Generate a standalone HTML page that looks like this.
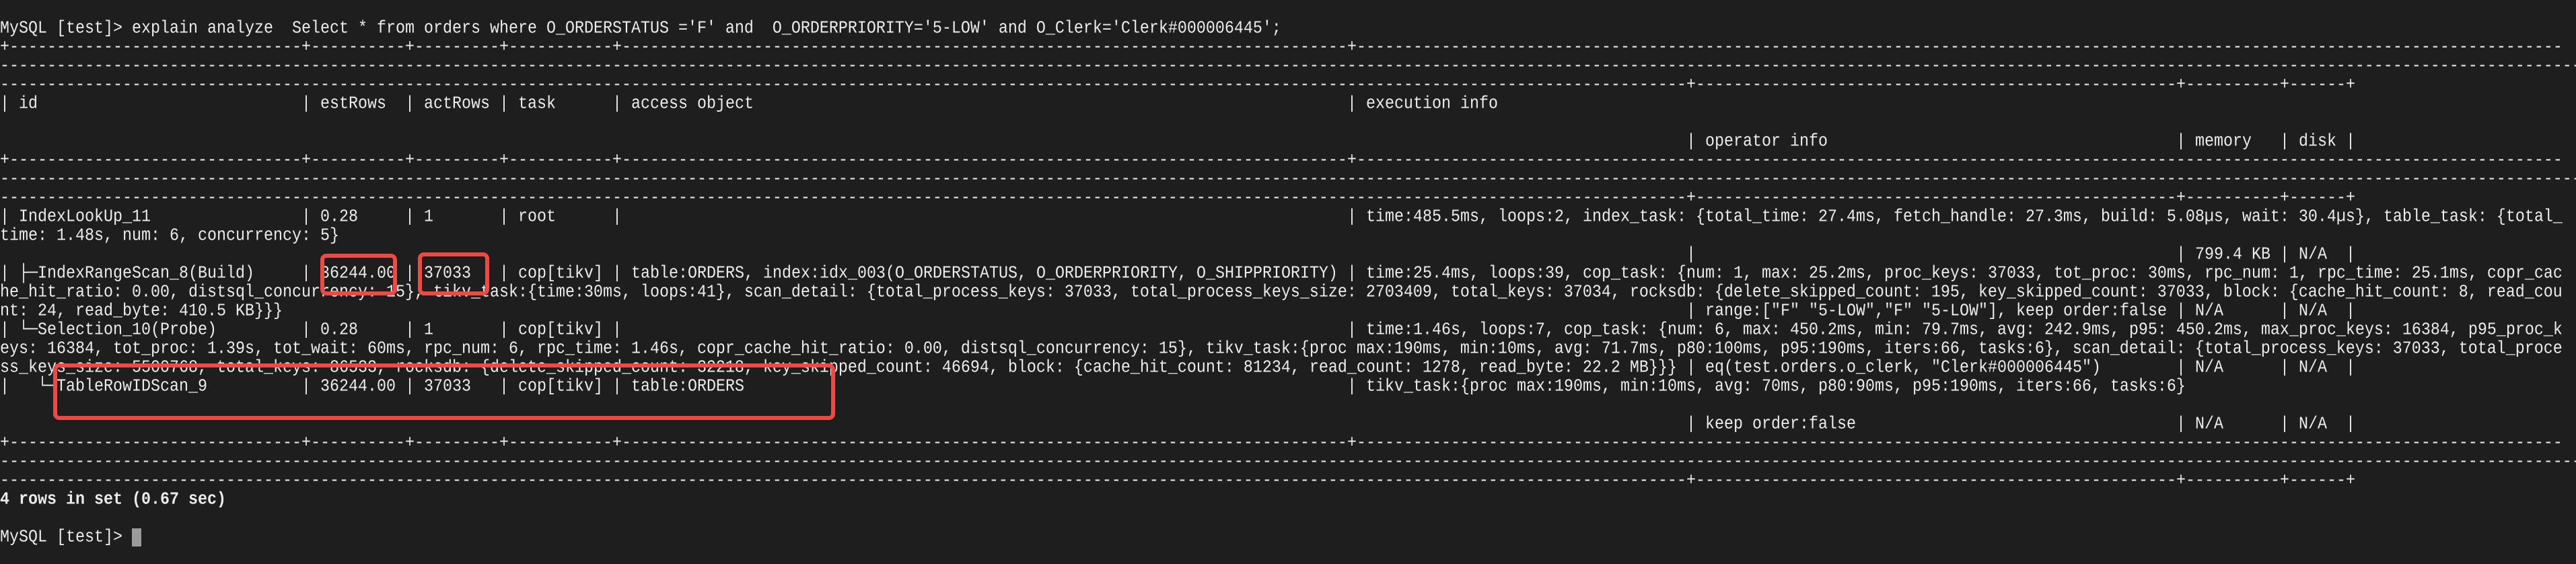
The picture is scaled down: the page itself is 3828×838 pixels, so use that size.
<!DOCTYPE html>
<html><head><meta charset="utf-8">
<style>
html,body{margin:0;padding:0;background:#1e1e1e;}
body{width:3828px;height:838px;position:relative;overflow:hidden;font-family:"Liberation Mono",monospace;font-size:23.33px;color:#ececec;}
.l{position:absolute;left:0;width:3828px;height:28px;line-height:28px;white-space:pre;transform:scaleY(1.12);transform-origin:50% 50%;}
.l span{position:absolute;top:0;white-space:pre;}
.b{position:absolute;border:6px solid #ee4a45;border-radius:9px;box-sizing:border-box;}
.cur{position:absolute;left:196px;top:785px;width:14px;height:27px;background:#9a9a9a;}
</style></head><body>

<div class="l" style="top:29px"><span style="left:0">MySQL [test]&gt; explain analyze  Select * from orders where O_ORDERSTATUS ='F' and  O_ORDERPRIORITY='5-LOW' and O_Clerk='Clerk#000006445';</span></div>

<div class="l" style="top:57px"><span style="left:0">+</span><span style="left:14px">-------------------------------</span><span style="left:448px">+</span><span style="left:462px">----------</span><span style="left:602px">+</span><span style="left:616px">---------</span><span style="left:742px">+</span><span style="left:756px">-----------</span><span style="left:910px">+</span><span style="left:924px">-----------------------------------------------------------------------------</span><span style="left:2002px">+</span><span style="left:2016px">--------------------------------------------------------------------------------------------------------------------------------</span></div>
<div class="l" style="top:85px"><span style="left:0">----------------------------------------------------------------------------------------------------------------------------------------------------------------------------------------------------------------------------------------------------------------------------------------</span></div>
<div class="l" style="top:113px"><span style="left:0">-----------------------------------------------------------------------------------------------------------------------------------------------------------------------------------</span><span style="left:2506px">+</span><span style="left:2520px">---------------------------------------------------</span><span style="left:3234px">+</span><span style="left:3248px">----------</span><span style="left:3388px">+</span><span style="left:3402px">------</span><span style="left:3486px">+</span></div>

<div class="l" style="top:141px"><span style="left:0">| id</span><span style="left:448px">| estRows</span><span style="left:602px">| actRows</span><span style="left:742px">| task</span><span style="left:910px">| access object</span><span style="left:2002px">| execution info</span></div>
<div class="l" style="top:197px"><span style="left:2506px">| operator info</span><span style="left:3234px">| memory</span><span style="left:3388px">| disk</span><span style="left:3486px">|</span></div>

<div class="l" style="top:225px"><span style="left:0">+</span><span style="left:14px">-------------------------------</span><span style="left:448px">+</span><span style="left:462px">----------</span><span style="left:602px">+</span><span style="left:616px">---------</span><span style="left:742px">+</span><span style="left:756px">-----------</span><span style="left:910px">+</span><span style="left:924px">-----------------------------------------------------------------------------</span><span style="left:2002px">+</span><span style="left:2016px">--------------------------------------------------------------------------------------------------------------------------------</span></div>
<div class="l" style="top:253px"><span style="left:0">----------------------------------------------------------------------------------------------------------------------------------------------------------------------------------------------------------------------------------------------------------------------------------------</span></div>
<div class="l" style="top:281px"><span style="left:0">-----------------------------------------------------------------------------------------------------------------------------------------------------------------------------------</span><span style="left:2506px">+</span><span style="left:2520px">---------------------------------------------------</span><span style="left:3234px">+</span><span style="left:3248px">----------</span><span style="left:3388px">+</span><span style="left:3402px">------</span><span style="left:3486px">+</span></div>

<div class="l" style="top:309px"><span style="left:0">| IndexLookUp_11</span><span style="left:448px">| 0.28</span><span style="left:602px">| 1</span><span style="left:742px">| root</span><span style="left:910px">|</span><span style="left:2002px">| time:485.5ms, loops:2, index_task: {total_time: 27.4ms, fetch_handle: 27.3ms, build: 5.08µs, wait: 30.4µs}, table_task: {total_</span></div>
<div class="l" style="top:337px"><span style="left:0">time: 1.48s, num: 6, concurrency: 5}</span></div>
<div class="l" style="top:365px"><span style="left:2506px">|</span><span style="left:3234px">| 799.4 KB</span><span style="left:3388px">| N/A</span><span style="left:3486px">|</span></div>

<div class="l" style="top:393px"><span style="left:0">| ├─IndexRangeScan_8(Build)</span><span style="left:448px">| 36244.00</span><span style="left:602px">| 37033</span><span style="left:742px">| cop[tikv]</span><span style="left:910px">| table:ORDERS, index:idx_003(O_ORDERSTATUS, O_ORDERPRIORITY, O_SHIPPRIORITY)</span><span style="left:2002px">| time:25.4ms, loops:39, cop_task: {num: 1, max: 25.2ms, proc_keys: 37033, tot_proc: 30ms, rpc_num: 1, rpc_time: 25.1ms, copr_cac</span></div>
<div class="l" style="top:421px"><span style="left:0">he_hit_ratio: 0.00, distsql_concurrency: 15}, tikv_task:{time:30ms, loops:41}, scan_detail: {total_process_keys: 37033, total_process_keys_size: 2703409, total_keys: 37034, rocksdb: {delete_skipped_count: 195, key_skipped_count: 37033, block: {cache_hit_count: 8, read_cou</span></div>
<div class="l" style="top:449px"><span style="left:0">nt: 24, read_byte: 410.5 KB}}}</span><span style="left:2506px">| range:["F" "5-LOW","F" "5-LOW"], keep order:false</span><span style="left:3234px">| N/A</span><span style="left:3388px">| N/A</span><span style="left:3486px">|</span></div>

<div class="l" style="top:477px"><span style="left:0">| └─Selection_10(Probe)</span><span style="left:448px">| 0.28</span><span style="left:602px">| 1</span><span style="left:742px">| cop[tikv]</span><span style="left:910px">|</span><span style="left:2002px">| time:1.46s, loops:7, cop_task: {num: 6, max: 450.2ms, min: 79.7ms, avg: 242.9ms, p95: 450.2ms, max_proc_keys: 16384, p95_proc_k</span></div>
<div class="l" style="top:505px"><span style="left:0">eys: 16384, tot_proc: 1.39s, tot_wait: 60ms, rpc_num: 6, rpc_time: 1.46s, copr_cache_hit_ratio: 0.00, distsql_concurrency: 15}, tikv_task:{proc max:190ms, min:10ms, avg: 71.7ms, p80:100ms, p95:190ms, iters:66, tasks:6}, scan_detail: {total_process_keys: 37033, total_proce</span></div>
<div class="l" style="top:533px"><span style="left:0">ss_keys_size: 5500768, total_keys: 86533, rocksdb: {delete_skipped_count: 32218, key_skipped_count: 46694, block: {cache_hit_count: 81234, read_count: 1278, read_byte: 22.2 MB}}}</span><span style="left:2506px">| eq(test.orders.o_clerk, "Clerk#000006445")</span><span style="left:3234px">| N/A</span><span style="left:3388px">| N/A</span><span style="left:3486px">|</span></div>

<div class="l" style="top:561px"><span style="left:0">|   └─TableRowIDScan_9</span><span style="left:448px">| 36244.00</span><span style="left:602px">| 37033</span><span style="left:742px">| cop[tikv]</span><span style="left:910px">| table:ORDERS</span><span style="left:2002px">| tikv_task:{proc max:190ms, min:10ms, avg: 70ms, p80:90ms, p95:190ms, iters:66, tasks:6}</span></div>
<div class="l" style="top:617px"><span style="left:2506px">| keep order:false</span><span style="left:3234px">| N/A</span><span style="left:3388px">| N/A</span><span style="left:3486px">|</span></div>

<div class="l" style="top:645px"><span style="left:0">+</span><span style="left:14px">-------------------------------</span><span style="left:448px">+</span><span style="left:462px">----------</span><span style="left:602px">+</span><span style="left:616px">---------</span><span style="left:742px">+</span><span style="left:756px">-----------</span><span style="left:910px">+</span><span style="left:924px">-----------------------------------------------------------------------------</span><span style="left:2002px">+</span><span style="left:2016px">--------------------------------------------------------------------------------------------------------------------------------</span></div>
<div class="l" style="top:673px"><span style="left:0">----------------------------------------------------------------------------------------------------------------------------------------------------------------------------------------------------------------------------------------------------------------------------------------</span></div>
<div class="l" style="top:701px"><span style="left:0">-----------------------------------------------------------------------------------------------------------------------------------------------------------------------------------</span><span style="left:2506px">+</span><span style="left:2520px">---------------------------------------------------</span><span style="left:3234px">+</span><span style="left:3248px">----------</span><span style="left:3388px">+</span><span style="left:3402px">------</span><span style="left:3486px">+</span></div>

<div class="l" style="top:729px;font-weight:bold"><span style="left:0">4 rows in set (0.67 sec)</span></div>
<div class="l" style="top:785px"><span style="left:0">MySQL [test]&gt; </span></div>
<div class="cur"></div>

<div class="b" style="left:476px;top:377px;width:114px;height:62px"></div>
<div class="b" style="left:621px;top:375px;width:106px;height:64px"></div>
<div class="b" style="left:79px;top:540px;width:1162px;height:84px"></div>
</body></html>
